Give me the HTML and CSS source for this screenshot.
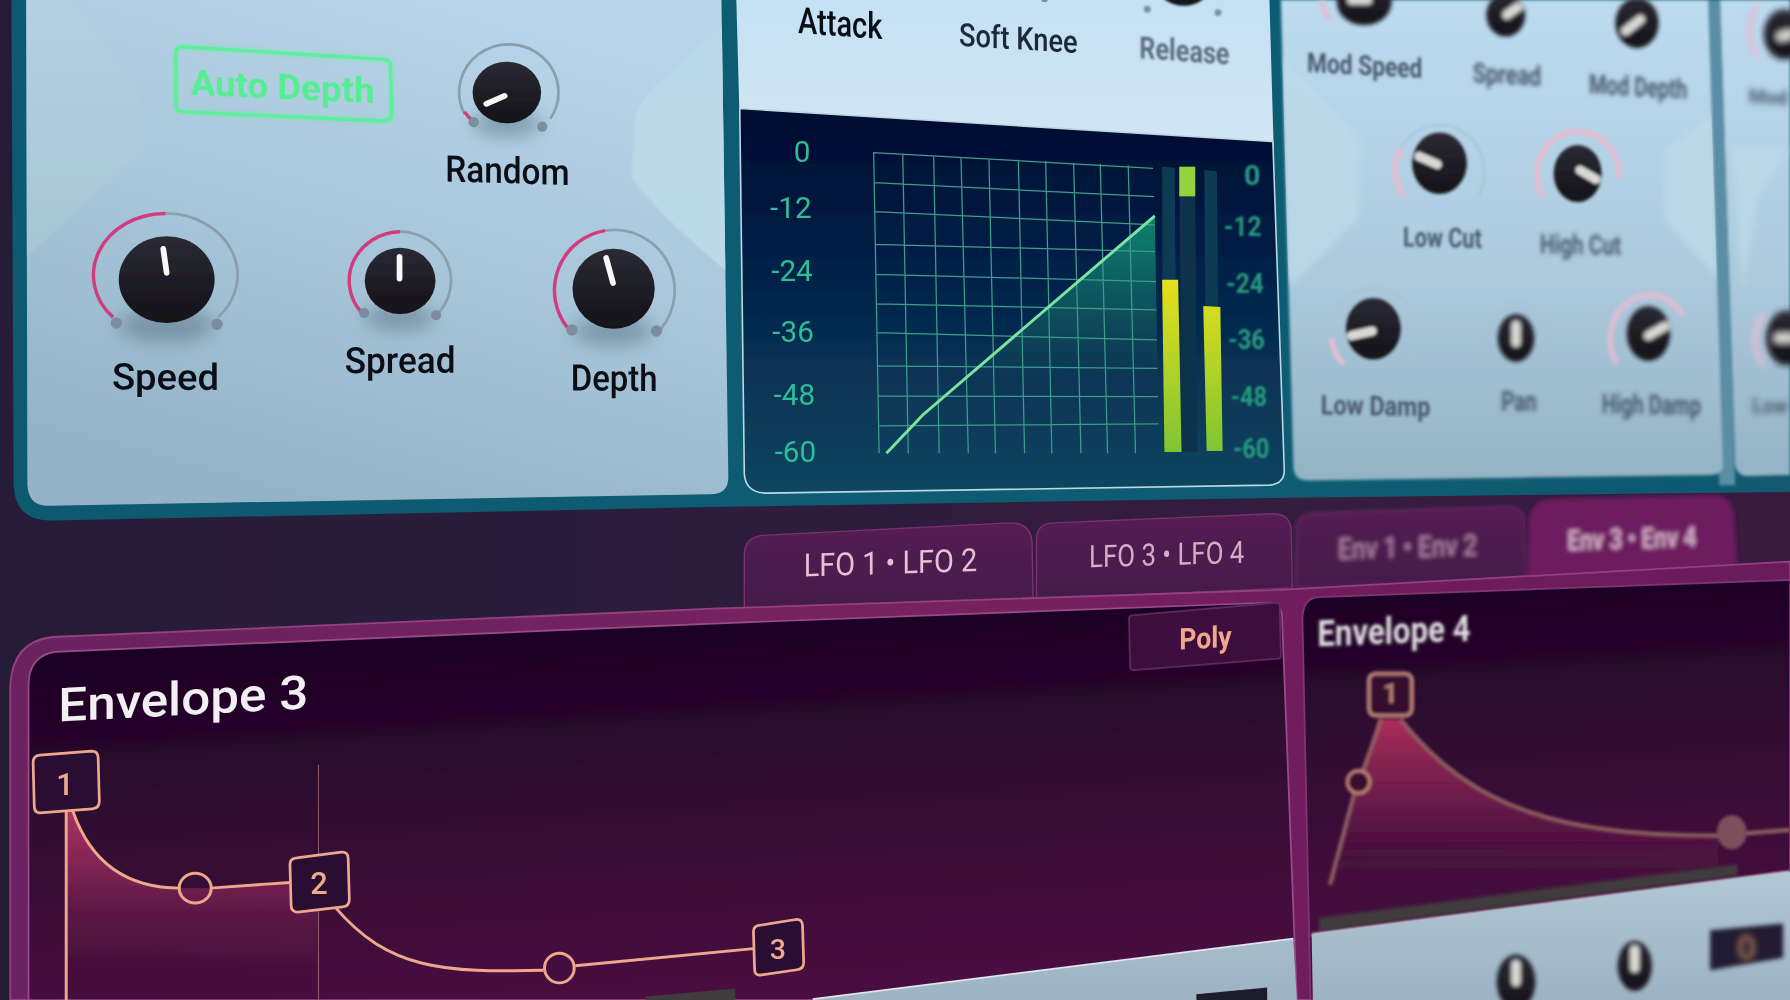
FILE: index.html
```html
<!DOCTYPE html>
<html lang="en">
<head>
<meta charset="utf-8">
<title>Synth interface</title>
<link rel="stylesheet" href="styles.css">
</head>
<body>
<div class="stage">
<svg class="scene" viewBox="0 0 1568 876" preserveAspectRatio="none" xmlns="http://www.w3.org/2000/svg">
<defs>
  <filter id="soft" filterUnits="userSpaceOnUse" x="0" y="0" width="1568" height="876"><feGaussianBlur stdDeviation="0.45"/></filter>
  <filter id="b06" filterUnits="userSpaceOnUse" x="0" y="0" width="1568" height="876"><feGaussianBlur stdDeviation="0.6"/></filter>
  <filter id="b1" filterUnits="userSpaceOnUse" x="0" y="0" width="1568" height="876"><feGaussianBlur stdDeviation="1"/></filter>
  <filter id="b15" filterUnits="userSpaceOnUse" x="0" y="0" width="1568" height="876"><feGaussianBlur stdDeviation="1.5"/></filter>
  <filter id="b2" filterUnits="userSpaceOnUse" x="0" y="0" width="1568" height="876"><feGaussianBlur stdDeviation="2"/></filter>
  <filter id="b3" filterUnits="userSpaceOnUse" x="0" y="0" width="1568" height="876"><feGaussianBlur stdDeviation="3"/></filter>
  <filter id="b8" filterUnits="userSpaceOnUse" x="0" y="0" width="1568" height="876"><feGaussianBlur stdDeviation="8"/></filter>
  <filter id="glow" filterUnits="userSpaceOnUse" x="0" y="0" width="1568" height="876"><feGaussianBlur stdDeviation="2"/></filter>
  <clipPath id="p1Clip"><path d="M23,0 L24,425 Q25,443 42,443 L622,433 Q638,433 638,418 L632,0 Z"/></clipPath>
  <clipPath id="p3Clip"><path d="M1122,0 L1133,410 Q1134,421 1146,421 L1498,416 Q1510,416 1509,405 L1496,0 Z"/></clipPath>
  <linearGradient id="bgGrad" x1="0" y1="0" x2="1" y2="0"><stop offset="0" stop-color="#271e38"/><stop offset=".5" stop-color="#2f1f3e"/><stop offset="1" stop-color="#391a40"/></linearGradient>
  <linearGradient id="tealGrad" x1="0" y1="0" x2="1" y2="0"><stop offset="0" stop-color="#0b5a70"/><stop offset=".7" stop-color="#0d5c72"/><stop offset="1" stop-color="#12596e"/></linearGradient>
  <linearGradient id="p1Grad" gradientUnits="userSpaceOnUse" x1="400" y1="0" x2="280" y2="445"><stop offset="0" stop-color="#b7d4e8"/><stop offset=".5" stop-color="#a8c6d9"/><stop offset="1" stop-color="#94b3c6"/></linearGradient>
  <linearGradient id="p2Grad" x1="0" y1="0" x2="0" y2="1"><stop offset="0" stop-color="#c4e1f4"/><stop offset="1" stop-color="#d3e6f3"/></linearGradient>
  <linearGradient id="p3Grad" gradientUnits="userSpaceOnUse" x1="1300" y1="0" x2="1300" y2="425"><stop offset="0" stop-color="#bcdbef"/><stop offset=".55" stop-color="#adcbde"/><stop offset="1" stop-color="#93b2c4"/></linearGradient>
  <linearGradient id="decoA" gradientUnits="userSpaceOnUse" x1="0" y1="0" x2="0" y2="226"><stop offset="0" stop-color="#b4d1e3"/><stop offset="1" stop-color="#a6c5d4"/></linearGradient>
  <linearGradient id="decoB" gradientUnits="userSpaceOnUse" x1="0" y1="22" x2="0" y2="240"><stop offset="0" stop-color="#b9d8e9"/><stop offset="1" stop-color="#bcdae6"/></linearGradient>
  <linearGradient id="graphGrad" gradientUnits="userSpaceOnUse" x1="880" y1="95" x2="880" y2="432"><stop offset="0" stop-color="#020a30"/><stop offset=".45" stop-color="#04234a"/><stop offset="1" stop-color="#0c4660"/></linearGradient>
  <linearGradient id="kneeGrad" gradientUnits="userSpaceOnUse" x1="0" y1="189" x2="0" y2="335"><stop offset="0" stop-color="#0f8470"/><stop offset="1" stop-color="#0f8470" stop-opacity="0"/></linearGradient>
  <linearGradient id="meterGrad" gradientUnits="userSpaceOnUse" x1="0" y1="245" x2="0" y2="396"><stop offset="0" stop-color="#e7df1c"/><stop offset="1" stop-color="#7ec532"/></linearGradient>
  <linearGradient id="knobGrad" x1="0" y1="0" x2="0" y2="1"><stop offset="0" stop-color="#2b2a34"/><stop offset="1" stop-color="#131118"/></linearGradient>
  <linearGradient id="frameGrad" x1="0" y1="0" x2="1" y2="0"><stop offset="0" stop-color="#6a2460"/><stop offset=".5" stop-color="#76205f"/><stop offset="1" stop-color="#6a1e5a"/></linearGradient>
  <linearGradient id="envGrad" gradientUnits="userSpaceOnUse" x1="600" y1="540" x2="620" y2="876"><stop offset="0" stop-color="#1b0224"/><stop offset=".5" stop-color="#330b33"/><stop offset="1" stop-color="#4a1040"/></linearGradient>
  <linearGradient id="envFill" gradientUnits="userSpaceOnUse" x1="0" y1="710" x2="0" y2="876"><stop offset="0" stop-color="#ae3263"/><stop offset=".35" stop-color="#832656" stop-opacity=".85"/><stop offset="1" stop-color="#50123f" stop-opacity="0"/></linearGradient>
  <linearGradient id="env4Fill" gradientUnits="userSpaceOnUse" x1="0" y1="630" x2="0" y2="790"><stop offset="0" stop-color="#ad2c59"/><stop offset=".45" stop-color="#7a2050" stop-opacity=".75"/><stop offset="1" stop-color="#4c1040" stop-opacity="0"/></linearGradient>
  <linearGradient id="tabGrad" x1="0" y1="0" x2="0" y2="1"><stop offset="0" stop-color="#561e54"/><stop offset="1" stop-color="#431b49"/></linearGradient>
  <linearGradient id="bandGrad" gradientUnits="userSpaceOnUse" x1="0" y1="760" x2="0" y2="876"><stop offset="0" stop-color="#b2c8d6"/><stop offset="1" stop-color="#9db3c3"/></linearGradient>
</defs>

<g filter="url(#soft)">
  <rect class="plain" width="1568" height="876" fill="url(#bgGrad)"/>
  <path fill="url(#tealGrad)" d="M10,0 L12,425 Q13,456 45,456 L630,444 L1130,436 L1568,431 L1568,0 Z"/>

  <!-- Left panel -->
  <path fill="url(#p1Grad)" d="M23,0 L24,425 Q25,443 42,443 L622,433 Q638,433 638,418 L632,0 Z"/>
  <g clip-path="url(#p1Clip)">
    <path fill="url(#decoA)" filter="url(#b1)" d="M60,0 C92,42 127,70 127,108 L127,130 C95,160 60,190 20,228 L15,0 Z"/>
    <path fill="url(#decoB)" filter="url(#b1)" d="M640,16 C600,55 556,80 556,110 L553,155 C575,185 610,215 645,245 Z"/>
  </g>

  <!-- Auto Depth -->
  <path class="auto-glow" filter="url(#glow)" d="M160,41 L336,52 Q342,52 342,58 L343,100 Q343,106 337,106 L160,98 Q154,98 154,92 L154,47 Q154,41 160,41 Z"/>
  <path class="auto-box" d="M160,41 L336,52 Q342,52 342,58 L343,100 Q343,106 337,106 L160,98 Q154,98 154,92 L154,47 Q154,41 160,41 Z"/>
  <text class="ui auto-text" transform="translate(167 83) skewY(2.6)" textLength="161" lengthAdjust="spacingAndGlyphs">Auto Depth</text>

  <!-- Random -->
  <ellipse class="shadow" cx="444" cy="108" rx="30" ry="12" filter="url(#b8)"/>
  <path class="ring" d="M407,100 A43.500 42 0 1 1 482,104"/>
  <path class="ring-on" d="M413,105 A43.500 42 0 0 1 407,98"/>
  <circle class="dot" cx="415" cy="107" r="4.5"/><circle class="dot" cx="475" cy="111" r="4.5"/>
  <ellipse cx="444" cy="81" rx="30" ry="27" fill="url(#knobGrad)"/>
  <line class="pointer" x1="426" y1="91" x2="442" y2="84"/>
  <text class="ui label" transform="translate(390 159) skewY(1.6)" textLength="109" lengthAdjust="spacingAndGlyphs">Random</text>

  <!-- Speed -->
  <ellipse class="shadow" cx="146" cy="285" rx="42" ry="15" filter="url(#b8)"/>
  <path class="ring" d="M145,187 A63 54 0 0 1 191,278"/>
  <path class="ring-on" d="M99,278 A63 54 0 0 1 145,187"/>
  <circle class="dot" cx="102" cy="283" r="5"/><circle class="dot" cx="190" cy="284" r="5"/>
  <ellipse cx="146" cy="245" rx="42" ry="38" fill="url(#knobGrad)"/>
  <line class="pointer" x1="143" y1="218" x2="146" y2="239"/>
  <text class="ui label" transform="translate(98 341) skewY(.4)" textLength="94" lengthAdjust="spacingAndGlyphs">Speed</text>

  <!-- Spread -->
  <ellipse class="shadow" cx="350" cy="278" rx="31" ry="12" filter="url(#b8)"/>
  <path class="ring" d="M350.500,203 A45.500 43 0 0 1 385,273"/>
  <path class="ring-on" d="M316,273 A45.500 43 0 0 1 350.500,203"/>
  <circle class="dot" cx="319" cy="274" r="4.5"/><circle class="dot" cx="382" cy="276" r="4.5"/>
  <ellipse cx="350.500" cy="246" rx="31" ry="29" fill="url(#knobGrad)"/>
  <line class="pointer" x1="350" y1="225" x2="350" y2="244"/>
  <text class="ui label" transform="translate(302 327) skewY(-.3)" textLength="97" lengthAdjust="spacingAndGlyphs">Spread</text>

  <!-- Depth -->
  <ellipse class="shadow" cx="537" cy="290" rx="36" ry="13" filter="url(#b8)"/>
  <path class="ring" d="M530,202 A53 53 0 0 1 579,288"/>
  <path class="ring-on" d="M497,287 A53 53 0 0 1 530,202"/>
  <circle class="dot" cx="501" cy="289" r="5"/><circle class="dot" cx="575" cy="290" r="5"/>
  <ellipse cx="537.500" cy="253" rx="36" ry="35" fill="url(#knobGrad)"/>
  <line class="pointer" x1="531" y1="226" x2="537" y2="248"/>
  <text class="ui label" transform="translate(500 342) skewY(.4)" textLength="76" lengthAdjust="spacingAndGlyphs">Depth</text>

  <!-- Compressor panel -->
  <path fill="url(#p2Grad)" d="M645,0 L648,110 L1116,140 L1112,0 Z"/>
  <text class="ui label" transform="translate(699 29) skewY(4)" textLength="74" lengthAdjust="spacingAndGlyphs">Attack</text>
  <g filter="url(#b06)">
    <text class="ui label-mid" transform="translate(840 40) skewY(3.6)" textLength="104" lengthAdjust="spacingAndGlyphs">Soft Knee</text>
    <circle class="dot" cx="915" cy="-1" r="3"/>
  </g>
  <g filter="url(#b1)">
    <ellipse cx="1037" cy="-9" rx="21" ry="14" fill="url(#knobGrad)"/>
    <circle class="dot" cx="1005" cy="8" r="3"/><circle class="dot" cx="1067" cy="11" r="3"/>
    <text class="ui label-far" transform="translate(998 51) skewY(4)" textLength="79" lengthAdjust="spacingAndGlyphs">Release</text>
  </g>

  <path class="graph" fill="url(#graphGrad)" d="M648,95 L1115,124 L1125,412 Q1125,424 1112,425 L672,432 Q653,432 652,415 Z"/>

  <text class="ui scale" x="710" y="142" text-anchor="end">0</text>
  <text class="ui scale" x="711" y="191" text-anchor="end">-12</text>
  <text class="ui scale" x="712" y="246" text-anchor="end">-24</text>
  <text class="ui scale" x="713" y="300" text-anchor="end">-36</text>
  <text class="ui scale" x="714" y="355" text-anchor="end">-48</text>
  <text class="ui scale" x="715" y="405" text-anchor="end">-60</text>

  <path fill="url(#kneeGrad)" d="M776.500,397 L808.300,363.500 L1011.600,189 L1015,396 Z"/>
  <path class="grid" d="M765,133.700 L1010,147.400 M765.600,160 L1011,172.300 M766.200,185.400 L1011.500,197 M766.800,214 L1012,220.400 M767.400,240.300 L1012.500,246.700 M768,266.300 L1013,271.500 M768.600,291.400 L1013.500,297.800 M769.200,320.600 L1014,322.600 M769.800,346.900 L1014.500,347.400 M770.400,373.100 L1015,371.400
    M765.300,134 L770.100,397 M790.800,135 L795.600,397 M817.900,136.500 L822.700,397 M841.800,137.500 L848.200,397 M866.300,139 L872,397 M892.100,140 L897.500,397 M916,141 L921.400,397 M940.500,142.500 L946.900,397 M963.800,143.500 L970.200,397 M988.300,145 L994.700,397"/>
  <polyline class="knee" points="776.500,397 808.300,363.500 1011.600,189"/>

  <path class="track" d="M1018,146 L1029,147 L1031,396 L1019,396 Z"/>
  <path class="track-mid" d="M1033,147 L1047,148 L1049,396 L1035,396 Z"/>
  <path class="track" d="M1055,149 L1066,150 L1068,396 L1057,396 Z"/>
  <path fill="url(#meterGrad)" d="M1018,245 L1032,245 L1035,396 L1020,396 Z"/>
  <path fill="url(#meterGrad)" d="M1054,268 L1069,269 L1071,395 L1057,395 Z"/>
  <rect class="peak" x="1033" y="146" width="14" height="26"/>

  <g filter="url(#b1)">
    <text class="ui scale-far" x="1104" y="162" text-anchor="end">0</text>
    <text class="ui scale-far" x="1105" y="207" text-anchor="end" textLength="33" lengthAdjust="spacingAndGlyphs">-12</text>
    <text class="ui scale-far" x="1107" y="257" text-anchor="end" textLength="33" lengthAdjust="spacingAndGlyphs">-24</text>
    <text class="ui scale-far" x="1108" y="306" text-anchor="end" textLength="32" lengthAdjust="spacingAndGlyphs">-36</text>
    <text class="ui scale-far" x="1110" y="356" text-anchor="end" textLength="32" lengthAdjust="spacingAndGlyphs">-48</text>
    <text class="ui scale-far" x="1112" y="401" text-anchor="end" textLength="32" lengthAdjust="spacingAndGlyphs">-60</text>
  </g>

  <!-- Reverb panel -->
  <g filter="url(#b15)">
    <path class="separator" d="M1494,0 L1507,0 L1520,425 L1506,425 Z"/>
    <path fill="url(#p3Grad)" d="M1122,0 L1133,410 Q1134,421 1146,421 L1498,416 Q1510,416 1509,405 L1496,0 Z"/>
    <path fill="url(#p3Grad)" d="M1507,0 L1520,406 Q1521,418 1533,417 L1568,416 L1568,0 Z"/>
  </g>
  <g clip-path="url(#p3Clip)">
    <path class="deco-light" filter="url(#b3)" d="M1123,48 L1192,122 L1190,190 L1130,252 L1115,200 Z"/>
    <path class="deco-light" filter="url(#b3)" d="M1510,92 L1458,132 L1458,192 L1512,252 Z"/>
  </g>
  <path class="deco-light" filter="url(#b3)" d="M1568,130 L1540,170 L1526,255 L1518,130 Z"/>

  <g filter="url(#b2)">
    <path class="ring-pale" d="M1158,0 A40 40 0 0 0 1165,18"/>
    <ellipse cx="1195" cy="2" rx="24" ry="20" fill="url(#knobGrad)"/>
    <line class="pointer-far" x1="1184" y1="0" x2="1198" y2="0"/>
    <ellipse cx="1319" cy="13" rx="17" ry="19" fill="url(#knobGrad)"/>
    <line class="pointer-far" x1="1320" y1="13" x2="1330" y2="6"/>
    <ellipse cx="1434" cy="20" rx="19" ry="22" fill="url(#knobGrad)"/>
    <line class="pointer-far" x1="1424" y1="27" x2="1437" y2="17"/>
  </g>
  <g filter="url(#b15)">
    <text class="ui label-blur" transform="translate(1145 63) skewY(3)" textLength="101" lengthAdjust="spacingAndGlyphs">Mod Speed</text>
  </g>
  <g filter="url(#b2)">
    <text class="ui label-blur" transform="translate(1290 72) skewY(3)" textLength="60" lengthAdjust="spacingAndGlyphs">Spread</text>
    <text class="ui label-blur" transform="translate(1392 82) skewY(3)" textLength="86" lengthAdjust="spacingAndGlyphs">Mod Depth</text>
  </g>

  <g filter="url(#b15)">
    <path class="ring-pale" d="M1230,172 A36 38 0 0 1 1227,130"/>
    <path class="ring-faint" d="M1227,130 A36 38 0 0 1 1295,172"/>
    <ellipse cx="1261" cy="143" rx="24" ry="27" fill="url(#knobGrad)"/>
    <line class="pointer-far" x1="1243" y1="137" x2="1259" y2="144"/>
    <text class="ui label-blur" transform="translate(1229 216) skewY(1)" textLength="69" lengthAdjust="spacingAndGlyphs">Low Cut</text>
    <path class="ring-pale" d="M1352,174 A36 38 0 1 1 1418,156"/>
    <ellipse cx="1382" cy="152" rx="21" ry="25" fill="url(#knobGrad)"/>
    <line class="pointer-far" x1="1384" y1="149" x2="1398" y2="157"/>
    <path class="ring-pale" d="M1177,319 A38 40 0 0 1 1166,296"/>
    <path class="ring-faint" d="M1166,296 A38 40 0 1 1 1233,318"/>
    <ellipse cx="1203" cy="288" rx="24" ry="27" fill="url(#knobGrad)"/>
    <line class="pointer-far" x1="1184" y1="294" x2="1202" y2="290"/>
    <text class="ui label-blur" transform="translate(1157 363) skewY(1)" textLength="96" lengthAdjust="spacingAndGlyphs">Low Damp</text>
  </g>
  <g filter="url(#b2)">
    <text class="ui label-blur" transform="translate(1349 222) skewY(1)" textLength="71" lengthAdjust="spacingAndGlyphs">High Cut</text>
    <path class="ring-faint" d="M1306,320 A29 33 0 1 1 1352,322"/>
    <ellipse cx="1328" cy="296" rx="16" ry="21" fill="url(#knobGrad)"/>
    <line class="pointer-far" x1="1328" y1="285" x2="1328" y2="300"/>
    <text class="ui label-blur" transform="translate(1315 360)" textLength="31" lengthAdjust="spacingAndGlyphs">Pan</text>
    <path class="ring-pale" d="M1416,318 A34 38 0 1 1 1474,276"/>
    <ellipse cx="1444" cy="292" rx="19" ry="24" fill="url(#knobGrad)"/>
    <line class="pointer-far" x1="1444" y1="294" x2="1458" y2="286"/>
    <text class="ui label-blur" transform="translate(1403 362) skewY(1)" textLength="87" lengthAdjust="spacingAndGlyphs">High Damp</text>
  </g>
  <g filter="url(#b3)">
    <path class="ring-pale" d="M1540,5 A30 34 0 0 0 1540,50"/>
    <ellipse cx="1563" cy="30" rx="18" ry="22" fill="url(#knobGrad)"/>
    <line class="pointer-far" x1="1560" y1="32" x2="1568" y2="30"/>
    <text class="ui label-edge" transform="translate(1532 90) skewY(3)">Mod</text>
    <path class="ring-pale" d="M1545,275 A30 34 0 0 0 1545,320"/>
    <ellipse cx="1565" cy="296" rx="18" ry="24" fill="url(#knobGrad)"/>
    <line class="pointer-far" x1="1558" y1="296" x2="1568" y2="296"/>
    <text class="ui label-edge" transform="translate(1535 362)">Low</text>
  </g>

  <!-- Tabs -->
  <rect class="tab-rest" x="1518" y="434" width="50" height="62"/>
  <path class="tab" fill="url(#tabGrad)" d="M652,535 L652,486 Q652,471 668,469 L885,458 Q902,458 904,474 L905,525 Z"/>
  <text class="ui tab-on" transform="translate(704 505) skewY(-1.8)" textLength="152" lengthAdjust="spacingAndGlyphs">LFO 1 • LFO 2</text>
  <g filter="url(#b06)">
    <path class="tab" fill="url(#tabGrad)" d="M908,525 L908,470 Q910,458 923,458 L1115,450 Q1130,450 1131,464 L1132,515 Z"/>
    <text class="ui tab-off" transform="translate(954 497) skewY(-1.7)" textLength="136" lengthAdjust="spacingAndGlyphs">LFO 3 • LFO 4</text>
  </g>
  <g filter="url(#b2)">
    <path class="tab" fill="url(#tabGrad)" d="M1135,515 L1136,462 Q1138,451 1150,450 L1320,444 Q1334,444 1335,456 L1336,510 Z"/>
    <text class="ui tab-dim" transform="translate(1172 490) skewY(-1.6)" textLength="122" lengthAdjust="spacingAndGlyphs">Env 1 • Env 2</text>
  </g>
  <g filter="url(#b2)">
    <path class="tab-active" d="M1338,510 L1339,455 Q1342,438 1360,437 L1500,434 Q1518,434 1519,452 L1522,505 Z"/>
    <text class="ui tab-active-text" transform="translate(1373 482) skewY(-1.6)" textLength="113" lengthAdjust="spacingAndGlyphs">Env 3 • Env 4</text>
  </g>

  <!-- Envelope frame -->
  <path class="frame" fill="url(#frameGrad)" d="M9,876 L9,600 Q11,562 46,558 L630,533 L1115,517 L1568,492 L1568,876 Z"/>

  <path class="env" fill="url(#envGrad)" d="M25,876 L25,600 Q25,575 48,571 L630,546 L1110,528 Q1122,527 1123,540 L1136,876 Z"/>
  <path class="env-far" fill="url(#envGrad)" d="M1148,876 L1141,545 Q1140,524 1155,523 L1568,508 L1568,876 Z"/>

  <!-- Envelope 3 -->
  <path fill="url(#envFill)" d="M58,708 L64,708 C80,760 115,778 158,778 L184,778 L254,773 L279,780 L279,876 L58,876 Z"/>
  <line class="guide" x1="279" y1="670" x2="279" y2="876"/>
  <path class="curve" d="M58,708 L58,876 M63,708 C80,760 115,778 158,778 M184,778 L254,773 M293,794 C340,850 390,852 476,850 M504,846 L660,831"/>
  <ellipse class="handle" cx="171" cy="778" rx="14" ry="13"/>
  <ellipse class="handle-mid" cx="490" cy="848" rx="13" ry="13"/>
  <path class="node" d="M35,661.500 L80,658 Q86,658 86,664 L87,702 Q87,708 81,708.500 L35,712 Q30,712 30,706 L29,668 Q29,662 35,661.500 Z"/>
  <text class="ui node-text" x="57" y="696" text-anchor="middle">1</text>
  <path class="node" d="M260,751.500 L299,746.500 Q305,746 305,752 L306,788 Q306,794 300,794.500 L261,799 Q255,799 255,793 L254,757 Q254,752 260,751.500 Z"/>
  <text class="ui node-text" x="279.500" y="783" text-anchor="middle">2</text>
  <path class="node" d="M666,810.500 L697,805.500 Q703,805 703,811 L704,843 Q704,849 698,849.500 L667,854 Q661,855 661,849 L660,816 Q660,811 666,810.500 Z"/>
  <text class="ui node-text-sm" x="681.500" y="840" text-anchor="middle">3</text>
  <text class="ui title" transform="translate(51 632) skewY(-3)" textLength="219" lengthAdjust="spacingAndGlyphs">Envelope 3</text>

  <!-- Poly -->
  <g filter="url(#b06)">
    <path class="poly" d="M992,539 L1118,528 Q1121,528 1121,531 L1122,574 Q1122,577 1119,577 L993,587 Q990,587 990,584 L989,542 Q989,539 992,539 Z"/>
    <text class="ui poly-text" transform="translate(1033 569) skewY(-3)" textLength="46" lengthAdjust="spacingAndGlyphs">Poly</text>
  </g>

  <!-- Envelope 4 -->
  <path class="bar" filter="url(#b06)" d="M566,876 L566,873 L644,866 L644,876 Z"/>
  <g filter="url(#b15)">
    <path fill="url(#env4Fill)" d="M1207,630 L1229,630 C1290,710 1370,732 1505,732 L1505,790 L1160,790 Z"/>
    <path class="bar" d="M1155,804 L1522,757 L1522,767 L1155,816 Z"/>
    <path class="curve-far" d="M1165,775 L1186,696 M1194,675 L1210,630 M1227,630 C1290,710 1370,732 1505,732 L1568,727"/>
    <circle class="handle-far" cx="1190" cy="685" r="10"/>
    <ellipse class="handle-fill" cx="1517" cy="729" rx="13" ry="15"/>
    <rect class="node-far" x="1199" y="590" width="38" height="37" rx="6"/>
    <text class="ui node-far-text" x="1218" y="616" text-anchor="middle">1</text>
    <text class="ui title-far" transform="translate(1154 566) skewY(-2)" textLength="134" lengthAdjust="spacingAndGlyphs">Envelope 4</text>
  </g>

  <!-- Lower light bands -->
  <path class="band-edge" d="M712,876 L1133,823"/>
  <path fill="url(#bandGrad)" d="M712,876 L1133,823 L1136,876 Z"/>
  <path class="band-edge-far" filter="url(#b1)" d="M1149,819 L1568,764"/>
  <path fill="url(#bandGrad)" filter="url(#b06)" d="M1149,819 L1568,764 L1568,876 L1150,876 Z"/>
  <path class="panel-dark" filter="url(#b06)" d="M1048,876 L1048,871 L1110,865 L1110,876 Z"/>
  <g filter="url(#b2)">
    <ellipse cx="1328" cy="860" rx="17" ry="24" fill="url(#knobGrad)"/>
    <line class="pointer-far" x1="1328" y1="845" x2="1328" y2="860"/>
    <ellipse cx="1432" cy="846" rx="15" ry="22" fill="url(#knobGrad)"/>
    <line class="pointer-far" x1="1432" y1="832" x2="1432" y2="848"/>
    <path class="display" d="M1498,815 L1562,809 L1562,839 L1498,850 Z"/>
  </g>
  <text class="ui display-text" filter="url(#b3)" x="1530" y="841" text-anchor="middle">0</text>
</g>
</svg>
</div>
</body>
</html>
```

FILE: styles.css
```css
html, body {
  margin: 0;
  padding: 0;
  background: #2a1f38;
  overflow: hidden;
}
.stage {
  width: 1790px;
  height: 1000px;
  overflow: hidden;
}
.scene {
  display: block;
  width: 100%;
  height: 100%;
}
.ui {
  font-family: Roboto, "Noto Sans", "Liberation Sans", sans-serif;
}
.auto-box {
  fill: none;
  stroke: #5cf09a;
  stroke-width: 3;
}
.auto-glow {
  fill: none;
  stroke: #5cf09a;
  stroke-width: 5;
  opacity: .35;
}
.auto-text {
  fill: #55ee92;
  font-size: 31px;
  font-weight: 700;
}
.label {
  fill: #0b0e17;
  font-size: 32px;
  font-weight: 500;
}
.label-mid {
  fill: #1b2a38;
  font-size: 28px;
  font-weight: 500;
}
.label-far {
  fill: #5b6e80;
  font-size: 27px;
  font-weight: 700;
}
.label-blur {
  fill: #47596a;
  font-size: 24px;
  font-weight: 700;
}
.label-edge {
  fill: #47596a;
  font-size: 17px;
  font-weight: 700;
}
.shadow {
  fill: #5a7486;
  opacity: .55;
}
.ring {
  fill: none;
  stroke: #8a9fad;
  stroke-width: 2.4;
}
.ring-on {
  fill: none;
  stroke: #d23a7c;
  stroke-width: 3;
}
.ring-pale {
  fill: none;
  stroke: #e2bdd3;
  stroke-width: 5;
}
.ring-faint {
  fill: none;
  stroke: #a5c2d3;
  stroke-width: 1.5;
}
.dot {
  fill: #7b8e9b;
}
.pointer {
  stroke: #f8f8f8;
  stroke-width: 5;
  stroke-linecap: round;
}
.pointer-far {
  stroke: #d8d8d4;
  stroke-width: 8;
  stroke-linecap: round;
}
.graph {
  stroke: #bcd8e4;
  stroke-width: 1.4;
}
.scale {
  fill: #2fbd96;
  font-size: 26px;
}
.scale-far {
  fill: #279a7e;
  font-size: 25px;
  font-weight: 700;
}
.grid {
  fill: none;
  stroke: #3f9c8c;
  stroke-width: 1.1;
}
.knee {
  fill: none;
  stroke: #7de3a2;
  stroke-width: 2.6;
}
.track {
  fill: #0c3b52;
}
.track-mid {
  fill: #08304a;
}
.peak {
  fill: #94d33e;
}
.deco-light {
  fill: #bedbe9;
  opacity: .7;
}
.separator {
  fill: #5a8ea5;
}
.tab-rest {
  fill: #3a1a40;
}
.tab {
  stroke: #7a3270;
  stroke-width: 1.2;
}
.tab-on {
  fill: #e6c0d3;
  font-size: 28px;
}
.tab-off {
  fill: #d5adc4;
  font-size: 27px;
}
.tab-dim {
  fill: #ab7fa0;
  font-size: 26px;
  font-weight: 500;
}
.tab-active {
  fill: #6d1c5e;
}
.tab-active-text {
  fill: #d7adca;
  font-size: 25px;
  font-weight: 700;
}
.frame {
  stroke: #94427f;
  stroke-width: 1.6;
}
.env {
  stroke: #9b4c8d;
  stroke-width: 1.5;
}
.env-far {
  stroke: #7d3673;
  stroke-width: 1.5;
}
.guide {
  stroke: #86566d;
  stroke-width: 1;
}
.curve {
  fill: none;
  stroke: #eda88b;
  stroke-width: 2.6;
}
.handle,
.handle-mid {
  fill: none;
  stroke: #eda88b;
  stroke-width: 2.6;
}
.node {
  fill: #2c0a30;
  stroke: #eda88b;
  stroke-width: 2.4;
}
.node-text {
  fill: #eea98c;
  font-size: 27px;
  font-weight: 500;
}
.node-text-sm {
  fill: #eea98c;
  font-size: 25px;
  font-weight: 500;
}
.title {
  fill: #f1eff1;
  font-size: 41px;
  font-weight: 500;
}
.poly {
  fill: #3e0c3c;
  stroke: #5c2c5a;
  stroke-width: 1.6;
}
.poly-text {
  fill: #efa98a;
  font-size: 26px;
  font-weight: 700;
}
.bar {
  fill: #3f3a3d;
}
.curve-far {
  fill: none;
  stroke: #8d5f60;
  stroke-width: 3.6;
}
.handle-far {
  fill: #38102f;
  stroke: #bb7f72;
  stroke-width: 3;
}
.handle-fill {
  fill: #7c4f5a;
}
.node-far {
  fill: #34092e;
  stroke: #b37e72;
  stroke-width: 3.6;
}
.node-far-text {
  fill: #b37e72;
  font-size: 24px;
  font-weight: 700;
}
.title-far {
  fill: #dfdcdf;
  font-size: 32px;
  font-weight: 700;
}
.band-edge {
  fill: none;
  stroke: #dfe6eb;
  stroke-width: 3;
}
.band-edge-far {
  fill: none;
  stroke: #c9d4dc;
  stroke-width: 3;
}
.panel-dark {
  fill: #1e1c2c;
}
.display {
  fill: #221f30;
}
.display-text {
  fill: #a06a52;
  font-size: 30px;
  font-weight: 700;
}
```
